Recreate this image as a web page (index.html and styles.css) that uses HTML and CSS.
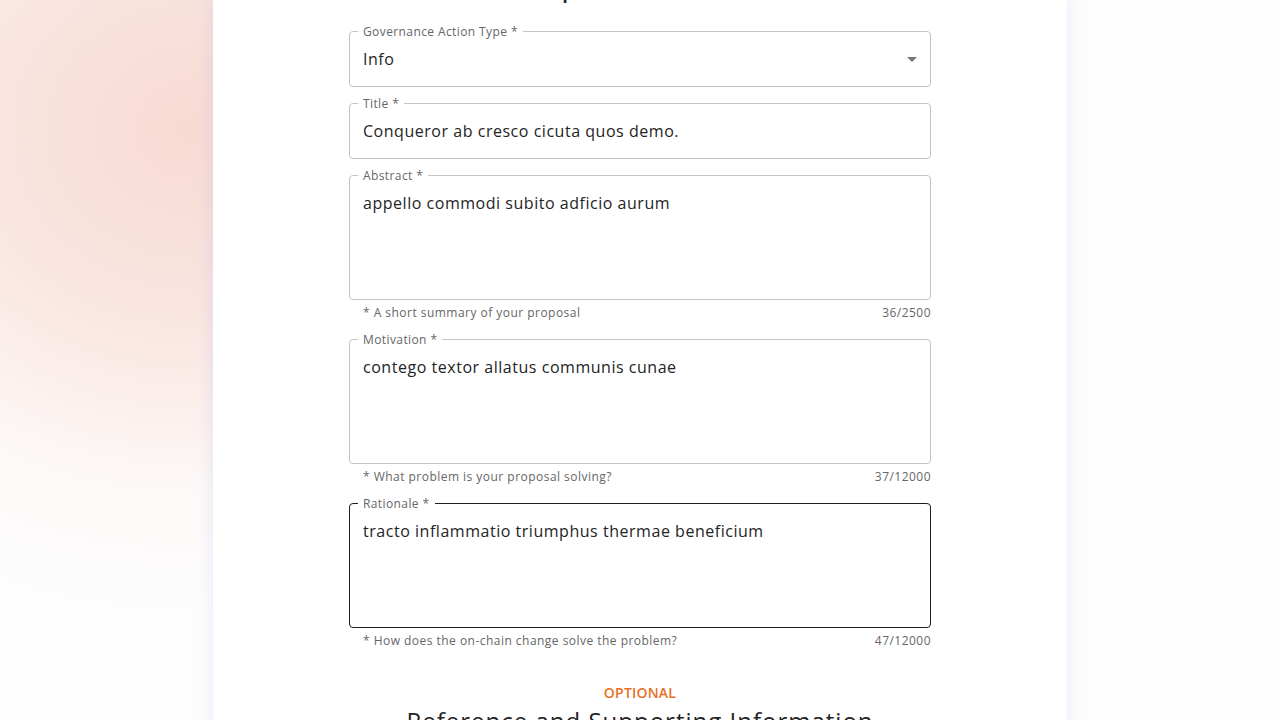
FILE: index.html
```html
<!DOCTYPE html>
<html lang="en">
<head>
<meta charset="utf-8">
<title>Create Governance Action</title>
<link rel="stylesheet" href="styles.css">
</head>
<body>
<div class="page">
  <main class="card">
    <h2 class="card-title">Complete the details</h2>
    <form class="form">
      <div class="group">
        <div class="field field-select">
          <span class="label">Governance Action Type *</span>
          <span class="value">Info</span>
          <svg class="arrow" width="24" height="24" viewBox="0 0 24 24"><path d="M7 10l5 5 5-5z" fill="#757575"/></svg>
        </div>
      </div>
      <div class="group">
        <div class="field">
          <span class="label">Title *</span>
          <span class="value">Conqueror ab cresco cicuta quos demo.</span>
        </div>
      </div>
      <div class="group">
        <div class="field field-multi">
          <span class="label">Abstract *</span>
          <span class="value">appello commodi subito adficio aurum</span>
        </div>
        <div class="helper"><span>* A short summary of your proposal</span><span>36/2500</span></div>
      </div>
      <div class="group">
        <div class="field field-multi">
          <span class="label">Motivation *</span>
          <span class="value">contego textor allatus communis cunae</span>
        </div>
        <div class="helper"><span>* What problem is your proposal solving?</span><span>37/12000</span></div>
      </div>
      <div class="group">
        <div class="field field-multi field-hover">
          <span class="label">Rationale *</span>
          <span class="value">tracto inflammatio triumphus thermae beneficium</span>
        </div>
        <div class="helper"><span>* How does the on-chain change solve the problem?</span><span>47/12000</span></div>
      </div>
    </form>
    <p class="optional">OPTIONAL</p>
    <h3 class="section-title">Reference and Supporting Information</h3>
  </main>
</div>
</body>
</html>
```

FILE: styles.css
```css
html, body {
  margin: 0;
  height: 100%;
  overflow: hidden;
}
body {
  font-family: "Open Sans", "Liberation Sans", sans-serif;
  color: #242424;
  background:
    radial-gradient(ellipse 540px 480px at 190px 130px, rgba(248, 218, 210, 1) 0%, rgba(249, 224, 218, 0.8) 40%, rgba(252, 240, 237, 0.35) 75%, rgba(253, 253, 253, 0) 100%),
    #fdfdfd;
}
.page {
  display: flex;
  justify-content: center;
}
.card {
  width: 854px;
  min-height: 800px;
  background: #ffffff;
  box-shadow: 0 0 14px 2px rgba(140, 150, 240, 0.16);
  display: flex;
  flex-direction: column;
  align-items: center;
}
.card-title {
  margin: -27px 26px 26px 0;
  font-size: 22px;
  line-height: 32px;
  font-weight: 600;
  color: #242424;
  letter-spacing: 0.5px;
}
.form {
  width: 582px;
  display: flex;
  flex-direction: column;
  gap: 16px;
}
.field {
  position: relative;
  box-sizing: border-box;
  height: 56px;
  border: 1px solid #c4c4c4;
  border-radius: 4px;
  padding: 15.5px 13px;
  display: flex;
  align-items: flex-start;
}
.field-multi {
  height: 125px;
}
.field-hover {
  border-color: #1d1d1d;
}
.label {
  position: absolute;
  top: -8px;
  left: 8px;
  padding: 0 5px;
  background: #ffffff;
  font-size: 12px;
  line-height: 16px;
  color: #666666;
  letter-spacing: 0.4px;
}
.value {
  font-size: 16px;
  line-height: 23px;
  color: #242424;
  letter-spacing: 0.53px;
}
.arrow {
  position: absolute;
  right: 6px;
  top: 15px;
}
.helper {
  display: flex;
  justify-content: space-between;
  margin-top: 3px;
  padding-left: 14px;
  font-size: 12px;
  line-height: 20px;
  color: #666666;
  letter-spacing: 0.47px;
}
.optional {
  margin: 32px 0 0;
  font-size: 14px;
  line-height: 20px;
  font-weight: 600;
  color: #e8701f;
  letter-spacing: 0.2px;
}
.section-title {
  margin: 1px 0 0;
  font-size: 24px;
  line-height: 34px;
  font-weight: 500;
  color: #242424;
  letter-spacing: 1px;
}
```
